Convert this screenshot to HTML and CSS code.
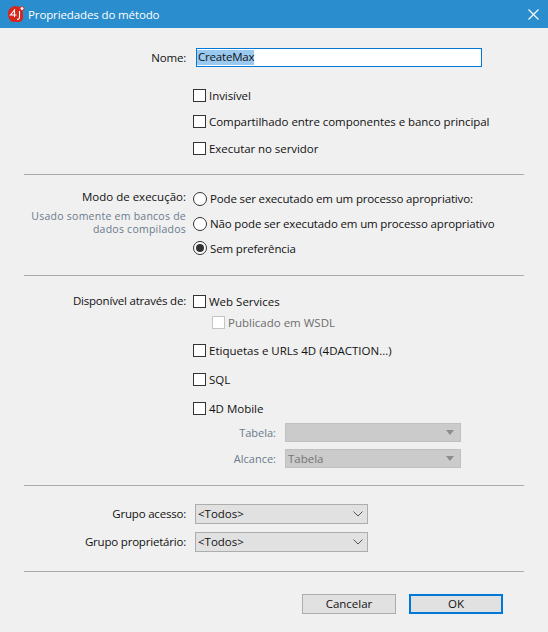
FILE: index.html
```html
<!DOCTYPE html>
<html lang="pt">
<head>
    <meta charset="UTF-8">
    <title>Propriedades do método</title>
    <link rel="stylesheet" href="styles.css">
</head>
<body>
    <div class="titlebar">
        <svg class="app-icon" width="18" height="18" viewBox="0 0 18 18">
            <path d="M1 9a7.500 7.500 0 0 1 15 -1v4q0 5-5 5h-4q-3 0-4.500-2.500t-1.500-5.500z" fill="#d8261c"/>
            <path d="M7.500 12v-7l-4 5h6" fill="none" stroke="#fff" stroke-width="1.100"/>
            <path d="M12.500 6v6q0 2.500-2.500 2.500" fill="none" stroke="#fff" stroke-width="1.100"/>
            <circle cx="15" cy="3.500" r="2" fill="#fff" stroke="#d8261c"/>
        </svg>
        <span class="title">Propriedades do método</span>
        <svg class="close" width="11" height="11" viewBox="0 0 11 11">
            <path d="M.5.5l10 10M10.500.5l-10 10" stroke="#fff" stroke-width="1.100" fill="none"/>
        </svg>
    </div>

    <div class="dialog">
        <div class="row name-row">
            <label class="label">Nome:</label>
            <div class="name-input"><span class="selected">CreateMax</span></div>
        </div>

        <div class="section first">
            <div class="side"></div>
            <div class="options">
                <div class="opt h27"><span class="check"></span>Invisível</div>
                <div class="opt h27"><span class="check"></span>Compartilhado entre componentes e banco principal</div>
                <div class="opt h27"><span class="check"></span>Executar no servidor</div>
            </div>
        </div>

        <hr>

        <div class="section mode">
            <div class="side">
                <div class="label">Modo de execução:</div>
                <div class="hint">Usado somente em bancos de dados compilados</div>
            </div>
            <div class="options">
                <div class="opt h25"><span class="radio"></span>Pode ser executado em um processo apropriativo:</div>
                <div class="opt h25"><span class="radio"></span>Não pode ser executado em um processo apropriativo</div>
                <div class="opt h25"><span class="radio on"></span>Sem preferência</div>
            </div>
        </div>

        <hr>

        <div class="section avail">
            <div class="side">
                <div class="label">Disponível através de:</div>
            </div>
            <div class="options">
                <div class="opt h21"><span class="check"></span>Web Services</div>
                <div class="opt h21 sub"><span class="check off"></span>Publicado em WSDL</div>
                <div class="opt h29 gap-top"><span class="check"></span>Etiquetas e URLs 4D (4DACTION...)</div>
                <div class="opt h29"><span class="check"></span>SQL</div>
                <div class="opt h29"><span class="check"></span>4D Mobile</div>
                <div class="mobile-row">
                    <span class="small-label">Tabela:</span>
                    <div class="select-off"><span></span><i class="arrow"></i></div>
                </div>
                <div class="mobile-row">
                    <span class="small-label">Alcance:</span>
                    <div class="select-off"><span>Tabela</span><i class="arrow"></i></div>
                </div>
            </div>
        </div>

        <hr>

        <div class="groups">
            <div class="row group-row">
                <label class="label">Grupo acesso:</label>
                <div class="select"><span>&lt;Todos&gt;</span>
                    <svg width="10" height="6" viewBox="0 0 10 6"><path d="M.5.5L5 5 9.500.5" fill="none" stroke="#555"/></svg>
                </div>
            </div>
            <div class="row group-row">
                <label class="label">Grupo proprietário:</label>
                <div class="select"><span>&lt;Todos&gt;</span>
                    <svg width="10" height="6" viewBox="0 0 10 6"><path d="M.5.5L5 5 9.500.5" fill="none" stroke="#555"/></svg>
                </div>
            </div>
        </div>

        <hr>

        <div class="buttons">
            <button type="button" class="btn">Cancelar</button>
            <button type="button" class="btn default">OK</button>
        </div>
    </div>
</body>
</html>
```

FILE: styles.css
```css
* {
    margin: 0;
    padding: 0;
    box-sizing: border-box;
    font-family: "Open Sans", "Noto Sans", Arial, sans-serif;
}

body {
    width: 548px;
    height: 632px;
    overflow: hidden;
    background: #f0f0f0;
    font-size: 11.5px;
    color: #111;
}

.titlebar {
    height: 28px;
    background: #2a8dcd;
    color: white;
    display: flex;
    align-items: center;
    padding: 0 9px 0 7px;
}

.app-icon {
    flex: none;
    margin-right: 3px;
}

.title {
    flex: 1;
    font-size: 11.5px;
    letter-spacing: -0.12px;
}

.dialog {
    padding: 20px 24px 0;
}

hr {
    border: none;
    height: 1px;
    background: #ababab;
}

.row {
    display: flex;
    align-items: center;
}

.label {
    display: block;
    width: 162px;
    text-align: right;
    line-height: 19px;
    letter-spacing: -0.2px;
}

.mode .label {
    letter-spacing: 0;
}

.name-input {
    margin-left: 10px;
    width: 286px;
    height: 19px;
    border: 1px solid #0078d7;
    background: white;
    display: flex;
    align-items: center;
}

.selected {
    background: #99c9ef;
    height: 15px;
    line-height: 14px;
    padding-left: 1px;
    letter-spacing: -0.2px;
}

.section {
    display: flex;
}

.section .side {
    width: 162px;
    flex: none;
}

.options {
    margin-left: 7px;
    flex: 1;
}

.first {
    padding: 15px 0 12px;
    letter-spacing: -0.06px;
}

.mode {
    padding: 12px 0 14px;
}

.mode .opt {
    letter-spacing: -0.15px;
}

.avail {
    padding: 15px 0 11px;
}

.opt {
    display: flex;
    align-items: center;
}

.h27 {
    height: 26.5px;
}

.h25 {
    height: 24.7px;
}

.h21 {
    height: 21px;
}

.h29 {
    height: 29px;
}

.gap-top {
    margin-top: 3px;
}

.sub {
    padding-left: 19px;
    color: #6d6d6d;
}

.check {
    flex: none;
    width: 13px;
    height: 13px;
    border: 1px solid #333;
    background: white;
    margin-right: 3px;
}

.check.off {
    border-color: #c4c4c4;
}

.radio {
    flex: none;
    width: 14px;
    height: 14px;
    border: 1px solid #333;
    border-radius: 50%;
    background: white;
    margin-right: 3px;
    display: flex;
    align-items: center;
    justify-content: center;
}

.radio.on::after {
    content: "";
    width: 8px;
    height: 8px;
    border-radius: 50%;
    background: #333;
}

.hint {
    margin-top: 4px;
    text-align: right;
    font-size: 10.5px;
    line-height: 13.5px;
    letter-spacing: 0.25px;
    color: #6b7a8c;
}

.mobile-row {
    display: flex;
    align-items: center;
    height: 20px;
    margin-bottom: 5.5px;
    color: #6b7a8c;
}

.small-label {
    width: 83px;
    text-align: right;
    font-size: 11px;
    margin-right: 9px;
}

.select-off {
    width: 176px;
    height: 19px;
    background: #cbcbcb;
    border: 1px solid #c0c0c0;
    display: flex;
    align-items: center;
    justify-content: space-between;
    padding: 0 6px 0 2px;
    color: #757575;
}

.arrow {
    border-left: 4px solid transparent;
    border-right: 4px solid transparent;
    border-top: 5px solid #8c8c8c;
}

.groups {
    padding: 18px 0 19px;
}

.group-row {
    margin-bottom: 8px;
}

.group-row:last-child {
    margin-bottom: 0;
}

.select {
    margin-left: 9px;
    width: 173px;
    height: 20px;
    background: #e1e1e1;
    border: 1px solid #adadad;
    display: flex;
    align-items: center;
    justify-content: space-between;
    padding: 0 4px 0 2px;
}

.buttons {
    display: flex;
    justify-content: flex-end;
    gap: 13px;
    margin-right: 21px;
    padding-top: 22px;
}

.btn {
    width: 94px;
    height: 20px;
    background: #e1e1e1;
    border: 1px solid #adadad;
    font-size: 11.5px;
    color: #111;
}

.btn.default {
    border: 2px solid #0078d7;
}
```
